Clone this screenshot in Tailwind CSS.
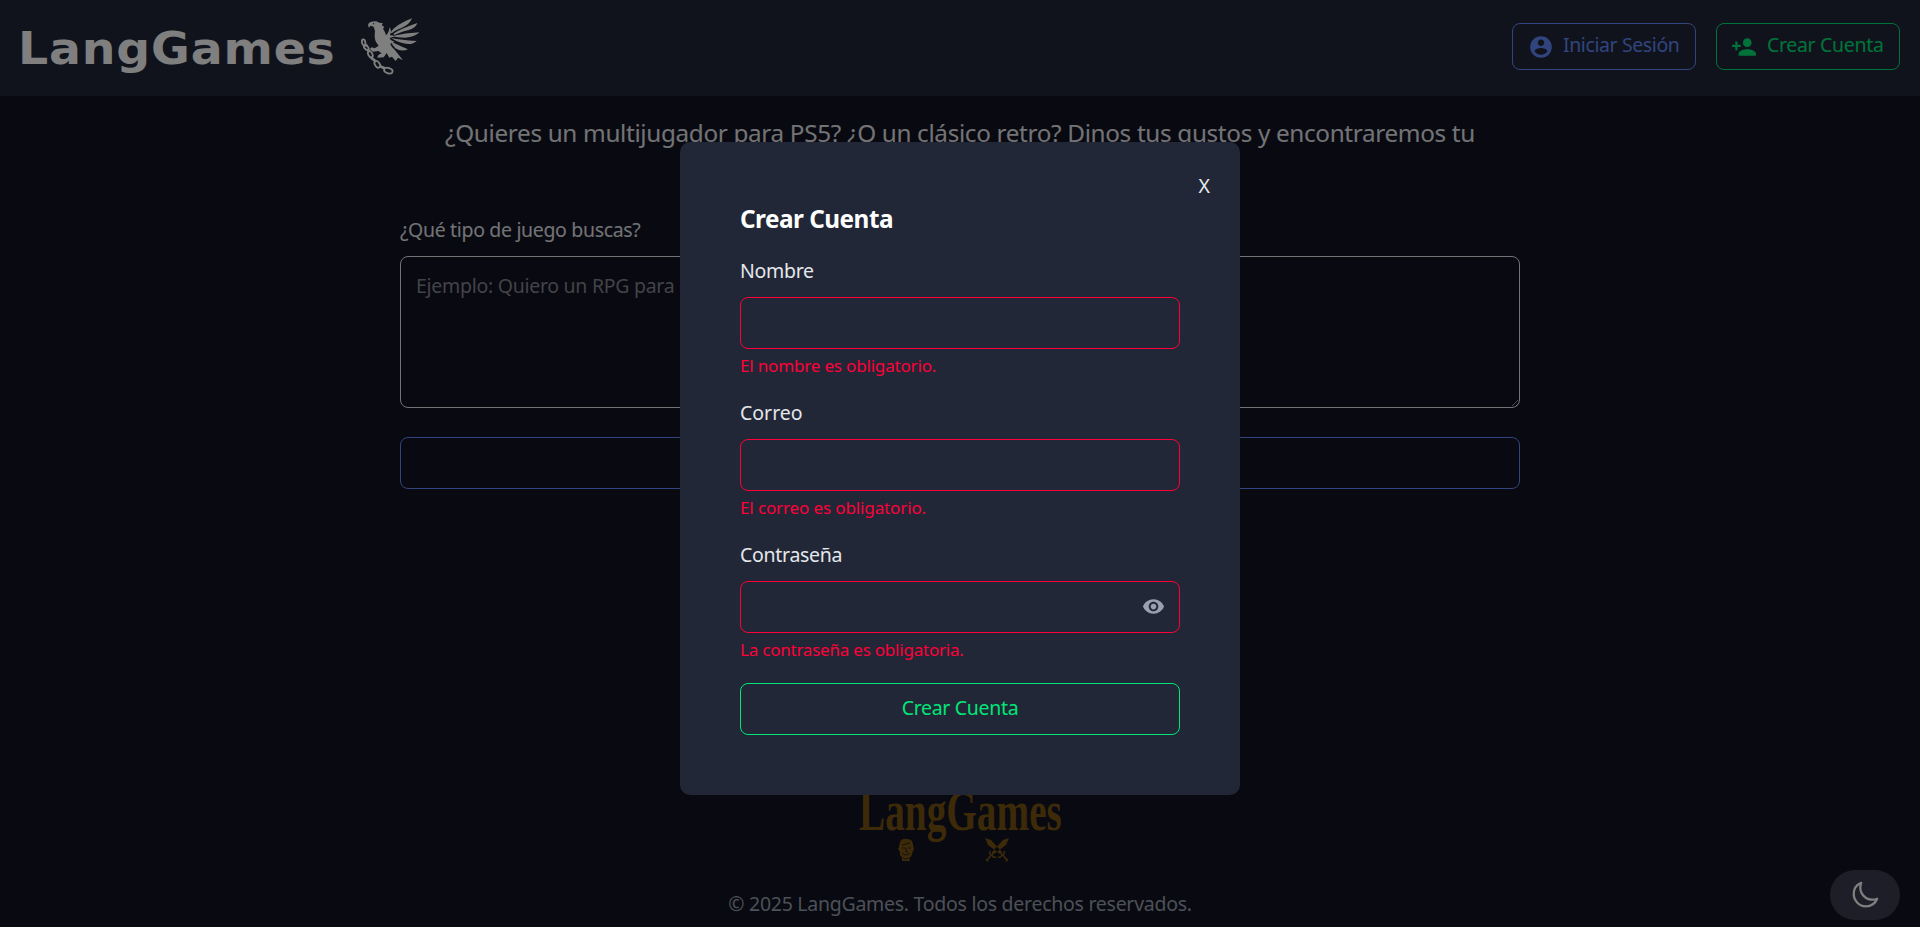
<!DOCTYPE html>
<html lang="es">
<head>
<meta charset="utf-8">
<title>LangGames</title>
<script src="https://cdn.jsdelivr.net/npm/@tailwindcss/browser@4"></script>
</head>
<body class="h-[927px] overflow-hidden bg-[#121222] font-['Noto_Sans',sans-serif] text-[19.5px] leading-[30px] text-[#e5e7eb]">
<div class="flex h-full flex-col">
  <header class="flex h-24 shrink-0 items-center justify-between bg-[#212737] pr-5 pl-[18px]">
    <div class="flex items-center">
      <span class="w-[332px] origin-left scale-x-[1.075] pt-px font-['DejaVu_Sans',sans-serif] text-[44px] leading-[50px] font-bold tracking-[0.8px] whitespace-nowrap text-white">LangGames</span>
      <svg class="-mt-1.5 size-20 text-white" viewBox="0 0 240 240" fill="currentColor">
        <path d="M54 60Q56 51 66 50Q76 46 88 53L99 55L95 60L103 67L99 71L105 82L108 91Q116 86 119 67Q126 77 120 91Q130 91 134 95Q120 96 119 101Q124 106 134 111Q124 112 121 118Q125 128 134 134L159 166L144 158L137 168L126 155L118 158L110 144L101 157L82 158Q84 148 95 145L85 138L69 140L59 132L66 127L74 130L86 122Q73 109 74 91Q77 76 71 65L61 62L57 69Z"/>
        <path d="M121 83Q138 58 186 40Q180 58 154 69Q134 76 126 84Z"/>
        <path d="M130 86Q150 72 202 54Q198 70 174 76Q148 82 134 90Z"/>
        <path d="M128 93Q165 84 208 82Q195 97 165 98Q142 98 128 93Z"/>
        <path d="M124 99Q152 105 200 108Q186 122 160 115Q137 109 124 99Z"/>
        <path d="M123 109Q142 120 174 133Q154 142 136 130Q126 120 123 109Z"/>
        <g fill="none" stroke="currentColor" stroke-width="5.5">
          <ellipse cx="41" cy="112" rx="5" ry="9" transform="rotate(-12 41 112)"/>
          <ellipse cx="49" cy="128" rx="5" ry="8" transform="rotate(-50 49 128)"/>
          <ellipse cx="61" cy="148" rx="6" ry="10" transform="rotate(-28 61 148)"/>
          <ellipse cx="82" cy="178" rx="7" ry="11" transform="rotate(-35 82 178)"/>
          <ellipse cx="115" cy="197" rx="13" ry="8" transform="rotate(18 115 197)"/>
          <path d="M63 158L76 168M90 184L104 190M48 118L50 124M54 135L58 140" stroke-width="8"/>
        </g>
        <circle cx="71" cy="56" r="2" fill="#212737"/>
      </svg>
    </div>
    <div class="-mt-[3px] flex gap-5">
      <button class="flex h-[47px] w-[184px] items-center rounded-lg border border-[#6289fa] pl-[15px] text-[#6289fa]">
        <svg class="size-[26px] shrink-0" viewBox="0 0 24 24" fill="currentColor"><path d="M12 2C6.48 2 2 6.48 2 12s4.48 10 10 10 10-4.48 10-10S17.52 2 12 2zm0 3c1.66 0 3 1.34 3 3s-1.34 3-3 3-3-1.34-3-3 1.34-3 3-3zm0 14.2c-2.5 0-4.71-1.28-6-3.22.03-1.99 4-3.08 6-3.08 1.99 0 5.97 1.09 6 3.08-1.29 1.94-3.5 3.22-6 3.22z"/></svg>
        <span class="pb-[3px] pl-[9px] tracking-[-0.4px] whitespace-nowrap">Iniciar Sesión</span>
      </button>
      <button class="flex h-[47px] w-[184px] items-center rounded-lg border border-[#00e676] pl-[14px] text-[#00e676]">
        <svg class="size-[26px] shrink-0" viewBox="0 0 24 24" fill="currentColor"><path d="M15 12c2.21 0 4-1.79 4-4s-1.79-4-4-4-4 1.79-4 4 1.79 4 4 4zm-9-2V7H4v3H1v2h3v3h2v-3h3v-2H6zm9 4c-2.67 0-8 1.34-8 4v2h16v-2c0-2.66-5.33-4-8-4z"/></svg>
        <span class="pb-[3px] pl-2.5 tracking-[-0.33px] whitespace-nowrap">Crear Cuenta</span>
      </button>
    </div>
  </header>

  <main class="mx-auto flex w-[1120px] flex-col pt-[19px]">
    <p class="mb-16 text-center text-[24.3px] leading-9 tracking-[-0.34px] whitespace-nowrap">¿Quieres un multijugador para PS5? ¿O un clásico retro? Dinos tus gustos y encontraremos tu</p>
    <label class="tracking-[-0.34px]">¿Qué tipo de juego buscas?</label>
    <textarea class="mt-[11px] h-[152px] w-full resize scheme-dark rounded-lg border border-[#e5e7eb] px-[15px] py-[14px] tracking-[-0.28px] placeholder:text-[#85878f]" placeholder="Ejemplo: Quiero un RPG para"></textarea>
    <button class="mt-[29px] h-[52px] rounded-lg border border-[#6289fa]"></button>
  </main>

  <footer class="mt-auto flex flex-col items-center pb-2">
    <div class="flex w-[202px] flex-col text-[#7a5410]">
      <span class="h-[56px] origin-left scale-x-[.677] font-['Liberation_Serif',serif] text-[58px] leading-[58px] font-bold whitespace-nowrap">LangGames</span>
      <div class="flex h-6 pl-[39px]">
        <svg class="h-6 w-4" viewBox="0 0 16 24"><path d="M2 4Q4 0 9 1Q15 1 15 7L16 11L14 15Q14 19 11 20L12 23L4 23L4 19Q1 17 2 14L0 11L1 9Z" fill="#7a5410"/><path d="M4 7Q8 6 12 5M4 10h3M10 10h3M8 10v4h2M4 15Q8 19 12 15M5 20q3 2 5 0" fill="none" stroke="#121221" stroke-width=".8"/></svg>
        <svg class="ml-[70px] h-6 w-[26px]" viewBox="0 0 26 24" fill="none" stroke="#7a5410"><path d="M1 0L7 2L18 14L16 16L4 7ZM25 0L19 2L8 14L10 16L22 7Z" fill="#7a5410" stroke="none"/><path d="M16 14L23 22M10 14L3 22" stroke-width="1.6"/><path d="M6 13Q5 17 8 17Q9 20 12 19M20 13Q21 17 18 17Q17 20 14 19" stroke-width="1.5"/><path d="M2 21L4 23.500M24 21L22 23.500" stroke-width="1.5"/></svg>
      </div>
    </div>
    <p class="mt-[27px] tracking-[-0.27px] text-[#99a1af]">© 2025 LangGames. Todos los derechos reservados.</p>
  </footer>
</div>

<button class="fixed right-5 bottom-[7px] flex h-[50px] w-[70px] items-center justify-center rounded-full bg-[#3a3c4e] text-white">
  <svg class="mr-px size-[30px]" viewBox="0 0 24 24" fill="none" stroke="currentColor" stroke-width="1.8" stroke-linejoin="round"><path d="M21.752 15.002A9.72 9.72 0 0 1 18 15.75c-5.385 0-9.75-4.365-9.75-9.75 0-1.33.266-2.597.748-3.752A9.753 9.753 0 0 0 3 11.25C3 16.635 7.365 21 12.75 21a9.753 9.753 0 0 0 9.002-5.998Z"/></svg>
</button>

<div class="fixed inset-0 flex items-center justify-center bg-black/50 pt-[10px]">
  <div class="relative h-[653px] w-[560px] rounded-[10px] bg-[#212737] p-[60px]">
    <button class="absolute top-[29px] right-[30px]">X</button>
    <h2 class="mb-[21px] text-[24.3px] leading-[33px] font-bold tracking-[-0.5px] text-white">Crear Cuenta</h2>
    <form class="flex flex-col">
      <div class="mb-[19px] flex flex-col">
        <label class="tracking-[-0.3px]">Nombre</label>
        <input class="mt-[11px] h-[52px] rounded-lg border border-[#ff0037] px-4">
        <p class="mt-1 text-[17px] leading-[26px] tracking-[-0.17px] text-[#ff0037]">El nombre es obligatorio.</p>
      </div>
      <div class="mb-[19px] flex flex-col">
        <label>Correo</label>
        <input class="mt-[11px] h-[52px] rounded-lg border border-[#ff0037] px-4">
        <p class="mt-1 text-[17px] leading-[26px] tracking-[-0.12px] text-[#ff0037]">El correo es obligatorio.</p>
      </div>
      <div class="mb-5 flex flex-col">
        <label class="tracking-[-0.3px]">Contraseña</label>
        <div class="mt-[11px] flex h-[52px] items-center rounded-lg border border-[#ff0037] pr-3.5 pl-4">
          <input type="password" class="min-w-0 flex-1">
          <svg class="mb-px size-[23px] text-[#99a1af]" viewBox="0 0 24 24" fill="currentColor"><path d="M12 4.5C7 4.5 2.73 7.61 1 12c1.73 4.39 6 7.5 11 7.5s9.27-3.11 11-7.5c-1.73-4.39-6-7.5-11-7.5zM12 17c-2.76 0-5-2.24-5-5s2.24-5 5-5 5 2.24 5 5-2.24 5-5 5zm0-8c-1.66 0-3 1.34-3 3s1.34 3 3 3 3-1.34 3-3-1.34-3-3-3z"/></svg>
        </div>
        <p class="mt-1 text-[17px] leading-[26px] tracking-[-0.22px] text-[#ff0037]">La contraseña es obligatoria.</p>
      </div>
      <button type="button" class="h-[52px] rounded-lg border border-[#00e676] pb-0.5 tracking-[-0.33px] text-[#00e676]">Crear Cuenta</button>
    </form>
  </div>
</div>
</body>
</html>
